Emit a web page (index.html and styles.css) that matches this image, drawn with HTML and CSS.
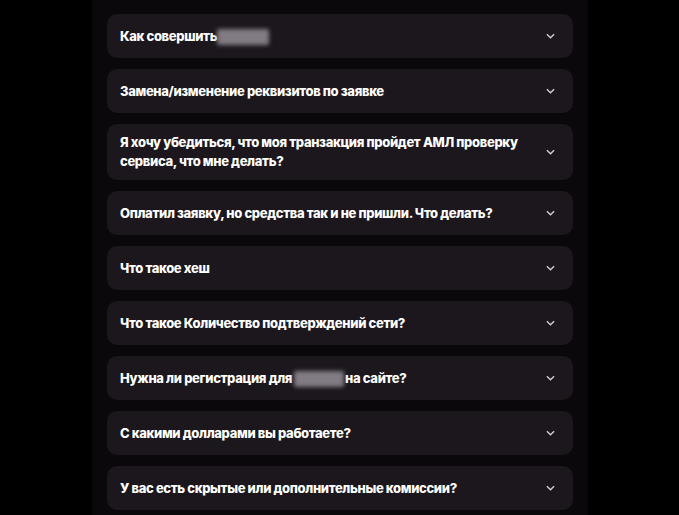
FILE: index.html
```html
<!DOCTYPE html>
<html lang="ru">
<head>
<meta charset="utf-8">
<link rel="stylesheet" href="styles.css">
</head>
<body>
<main class="panel">
  <div class="faq">
    <div class="item"><span class="q">Как совершить <span class="blur blur-a"></span></span><svg class="chev" viewBox="0 0 10 6"><path d="M1 1l4 4 4-4"/></svg></div>
    <div class="item"><span class="q">Замена/изменение реквизитов по заявке</span><svg class="chev" viewBox="0 0 10 6"><path d="M1 1l4 4 4-4"/></svg></div>
    <div class="item tall"><span class="q">Я хочу убедиться, что моя транзакция пройдет АМЛ проверку сервиса, что мне делать?</span><svg class="chev" viewBox="0 0 10 6"><path d="M1 1l4 4 4-4"/></svg></div>
    <div class="item"><span class="q">Оплатил заявку, но средства так и не пришли. Что делать?</span><svg class="chev" viewBox="0 0 10 6"><path d="M1 1l4 4 4-4"/></svg></div>
    <div class="item"><span class="q">Что такое хеш</span><svg class="chev" viewBox="0 0 10 6"><path d="M1 1l4 4 4-4"/></svg></div>
    <div class="item"><span class="q">Что такое Количество подтверждений сети?</span><svg class="chev" viewBox="0 0 10 6"><path d="M1 1l4 4 4-4"/></svg></div>
    <div class="item"><span class="q">Нужна ли регистрация для <span class="blur blur-b"></span> на сайте?</span><svg class="chev" viewBox="0 0 10 6"><path d="M1 1l4 4 4-4"/></svg></div>
    <div class="item"><span class="q">С какими долларами вы работаете?</span><svg class="chev" viewBox="0 0 10 6"><path d="M1 1l4 4 4-4"/></svg></div>
    <div class="item"><span class="q">У вас есть скрытые или дополнительные комиссии?</span><svg class="chev" viewBox="0 0 10 6"><path d="M1 1l4 4 4-4"/></svg></div>
  </div>
</main>
</body>
</html>
```
FILE: styles.css
```css
html, body {
  margin: 0;
  padding: 0;
  background: #000;
  height: 515px;
  overflow: hidden;
}
body {
  font-family: Inter, "Noto Sans", sans-serif;
  display: flex;
  justify-content: center;
}
.panel {
  width: 496px;
  margin-left: 1px;
  margin-top: -20px;
  background: #0b080b;
  border-radius: 18px;
  padding: 34px 15px 20px 15px;
  box-sizing: border-box;
  height: 560px;
}
.faq {
  display: flex;
  flex-direction: column;
  gap: 11px;
}
.item {
  background: #1b171c;
  border-radius: 10px;
  min-height: 44px;
  box-sizing: border-box;
  padding: 8px 18px 8px 13px;
  display: flex;
  align-items: center;
  justify-content: space-between;
  gap: 12px;
}
.item.tall {
  min-height: 56px;
}
.q {
  color: #fff;
  font-weight: 800;
  font-size: 13px;
  line-height: 19px;
  letter-spacing: -0.35px;
}
.blur {
  display: inline-block;
  vertical-align: middle;
  height: 16px;
  background: #817c84;
  filter: blur(2px);
  border-radius: 2px;
}
.blur-a { width: 52px; margin-left: -3px; }
.blur-b { width: 50px; margin: 0 -1px 0 -1px; }
.chev {
  width: 9px;
  height: 6px;
  flex: none;
  fill: none;
  stroke: #d3cad8;
  stroke-width: 1.6;
}
```
